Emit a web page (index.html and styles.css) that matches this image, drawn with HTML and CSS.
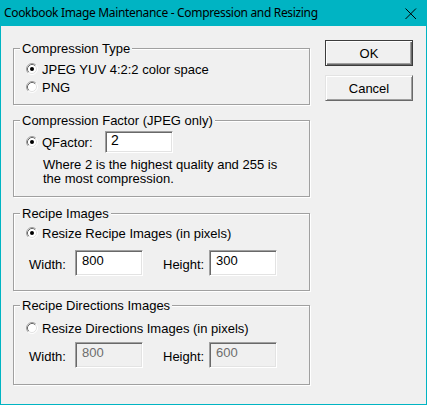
FILE: index.html
```html
<!DOCTYPE html>
<html>
<head>
<meta charset="utf-8">
<link rel="stylesheet" href="styles.css">
</head>
<body>
<div class="window">
  <div class="titlebar">
    <span class="title">Cookbook Image Maintenance - Compression and Resizing</span>
    <svg class="close" width="12" height="12" viewBox="0 0 12 12"><path d="M0.5 0.5 L11 11 M11 0.5 L0.5 11" stroke="#000" stroke-width="1" fill="none"/></svg>
  </div>
  <div class="client">
    <div class="left">
      <div class="group g1">
        <div class="legend">Compression Type</div>
        <div class="radio-row first">
          <svg class="radio" width="12" height="12" viewBox="0 0 12 12"><circle cx="6" cy="6" r="5" fill="#fff"/><path d="M2.11 9.89 A5.5 5.5 0 0 1 9.89 2.11" stroke="#a0a0a0" fill="none"/><path d="M9.89 2.11 A5.5 5.5 0 0 1 2.11 9.89" stroke="#fff" fill="none"/><path d="M2.82 9.18 A4.5 4.5 0 0 1 9.18 2.82" stroke="#696969" fill="none"/><path d="M9.18 2.82 A4.5 4.5 0 0 1 2.82 9.18" stroke="#e3e3e3" fill="none"/><circle cx="6" cy="6" r="2" fill="#000"/></svg>
          <span>JPEG YUV 4:2:2 color space</span>
        </div>
        <div class="radio-row">
          <svg class="radio" width="12" height="12" viewBox="0 0 12 12"><circle cx="6" cy="6" r="5" fill="#fff"/><path d="M2.11 9.89 A5.5 5.5 0 0 1 9.89 2.11" stroke="#a0a0a0" fill="none"/><path d="M9.89 2.11 A5.5 5.5 0 0 1 2.11 9.89" stroke="#fff" fill="none"/><path d="M2.82 9.18 A4.5 4.5 0 0 1 9.18 2.82" stroke="#696969" fill="none"/><path d="M9.18 2.82 A4.5 4.5 0 0 1 2.82 9.18" stroke="#e3e3e3" fill="none"/></svg>
          <span>PNG</span>
        </div>
      </div>

      <div class="group g2">
        <div class="legend">Compression Factor (JPEG only)</div>
        <div class="q-row">
          <svg class="radio" width="12" height="12" viewBox="0 0 12 12"><circle cx="6" cy="6" r="5" fill="#fff"/><path d="M2.11 9.89 A5.5 5.5 0 0 1 9.89 2.11" stroke="#a0a0a0" fill="none"/><path d="M9.89 2.11 A5.5 5.5 0 0 1 2.11 9.89" stroke="#fff" fill="none"/><path d="M2.82 9.18 A4.5 4.5 0 0 1 9.18 2.82" stroke="#696969" fill="none"/><path d="M9.18 2.82 A4.5 4.5 0 0 1 2.82 9.18" stroke="#e3e3e3" fill="none"/><circle cx="6" cy="6" r="2" fill="#000"/></svg>
          <span class="q-label">QFactor:</span>
          <div class="edit small">2</div>
        </div>
        <div class="desc">Where 2 is the highest quality and 255 is<br>the most compression.</div>
      </div>

      <div class="group g3">
        <div class="legend">Recipe Images</div>
        <div class="radio-row r3">
          <svg class="radio" width="12" height="12" viewBox="0 0 12 12"><circle cx="6" cy="6" r="5" fill="#fff"/><path d="M2.11 9.89 A5.5 5.5 0 0 1 9.89 2.11" stroke="#a0a0a0" fill="none"/><path d="M9.89 2.11 A5.5 5.5 0 0 1 2.11 9.89" stroke="#fff" fill="none"/><path d="M2.82 9.18 A4.5 4.5 0 0 1 9.18 2.82" stroke="#696969" fill="none"/><path d="M9.18 2.82 A4.5 4.5 0 0 1 2.82 9.18" stroke="#e3e3e3" fill="none"/><circle cx="6" cy="6" r="2" fill="#000"/></svg>
          <span>Resize Recipe Images (in pixels)</span>
        </div>
        <div class="size-row s3">
          <span class="size-label">Width:</span>
          <div class="edit">800</div>
          <span class="size-label h">Height:</span>
          <div class="edit">300</div>
        </div>
      </div>

      <div class="group g4">
        <div class="legend">Recipe Directions Images</div>
        <div class="radio-row r4">
          <svg class="radio" width="12" height="12" viewBox="0 0 12 12"><circle cx="6" cy="6" r="5" fill="#fff"/><path d="M2.11 9.89 A5.5 5.5 0 0 1 9.89 2.11" stroke="#a0a0a0" fill="none"/><path d="M9.89 2.11 A5.5 5.5 0 0 1 2.11 9.89" stroke="#fff" fill="none"/><path d="M2.82 9.18 A4.5 4.5 0 0 1 9.18 2.82" stroke="#696969" fill="none"/><path d="M9.18 2.82 A4.5 4.5 0 0 1 2.82 9.18" stroke="#e3e3e3" fill="none"/></svg>
          <span>Resize Directions Images (in pixels)</span>
        </div>
        <div class="size-row s4">
          <span class="size-label">Width:</span>
          <div class="edit disabled">800</div>
          <span class="size-label h">Height:</span>
          <div class="edit disabled">600</div>
        </div>
      </div>
    </div>

    <div class="right">
      <div class="btn default">OK</div>
      <div class="btn">Cancel</div>
    </div>
  </div>
</div>
</body>
</html>
```

FILE: styles.css
```css
html, body {
  margin: 0;
  padding: 0;
  background: #f0f0f0;
}

.window {
  width: 427px;
  height: 405px;
  box-sizing: border-box;
  border: 1px solid #00b4c3;
  border-top: 0;
  background: #f0f0f0;
  font-family: "Liberation Sans", Arial, sans-serif;
  font-size: 13px;
  color: #000;
}

.titlebar {
  height: 26px;
  background: #00b4c3;
  display: flex;
  align-items: center;
  justify-content: space-between;
  padding: 0 9px 0 3px;
  box-sizing: border-box;
}

.title {
  font-family: "Noto Sans", "Open Sans", sans-serif;
  font-size: 12px;
  letter-spacing: -0.33px;
  line-height: 16px;
  color: #000;
  padding-bottom: 1px;
}

.close {
  display: block;
  margin-top: 1px;
}

.client {
  display: flex;
  padding: 0 0 0 12px;
}

.left {
  width: 297px;
  display: flex;
  flex-direction: column;
}

.group {
  box-sizing: border-box;
  border: 1px solid #a0a0a0;
  box-shadow: inset 1px 1px 0 #fff, 1px 1px 0 #fff;
  display: flex;
  flex-direction: column;
  padding-left: 12px;
}

.g1 { margin-top: 22px; height: 57px; }
.g2 { margin-top: 15px; height: 77px; }
.g3 { margin-top: 16px; height: 78px; }
.g4 { margin-top: 14px; height: 80px; }

.legend {
  align-self: flex-start;
  margin: -8px 0 0 -6px;
  padding: 0 2px;
  line-height: 15px;
  height: 15px;
  background: #f0f0f0;
  white-space: nowrap;
}

.radio-row {
  display: flex;
  align-items: center;
  height: 18px;
  line-height: 15px;
}

.radio-row.first { margin-top: 4px; }
.r3 { margin-top: 3px; }
.r4 { margin-top: 6px; }

.radio {
  display: block;
  flex: none;
  margin-right: 4px;
}

.q-row {
  display: flex;
  align-items: center;
  height: 22px;
  margin-top: 3px;
  line-height: 15px;
}

.q-label {
  width: 63px;
}

.edit {
  box-sizing: border-box;
  width: 68px;
  height: 26px;
  border: 1px solid;
  border-color: #a0a0a0 #fff #fff #a0a0a0;
  box-shadow: inset 1px 1px 0 #696969, inset -1px -1px 0 #e3e3e3;
  background: #fff;
  padding: 2px 4px 0 6px;
  line-height: 15px;
}

.edit.small {
  height: 22px;
  padding-top: 1px;
  padding-left: 5px;
  font-size: 14px;
}

.edit.disabled {
  background: #f0f0f0;
  color: #6d6d6d;
}

.desc {
  margin: 5px 0 0 17px;
  line-height: 14px;
}

.size-row {
  display: flex;
  align-items: center;
  height: 26px;
  padding-left: 3px;
  line-height: 15px;
}

.s3 { margin-top: 8px; }
.s4 { margin-top: 5px; }

.size-label {
  width: 46px;
  padding-top: 2px;
}

.size-label.h {
  margin-left: 20px;
}

.right {
  display: flex;
  flex-direction: column;
  margin-left: 15px;
  padding-top: 14px;
}

.btn {
  box-sizing: border-box;
  width: 88px;
  height: 26px;
  border: 1px solid;
  border-color: #e3e3e3 #696969 #696969 #e3e3e3;
  box-shadow: inset 1px 1px 0 #fff, inset -1px -1px 0 #a0a0a0;
  display: flex;
  align-items: center;
  justify-content: center;
  line-height: 15px;
  margin-bottom: 8px;
}

.btn.default {
  border: 1px solid #3c3c3c;
  box-shadow: inset 1px 1px 0 #fff, inset -1px -1px 0 #696969, inset -2px -2px 0 #a0a0a0;
  margin-bottom: 9px;
}
```
